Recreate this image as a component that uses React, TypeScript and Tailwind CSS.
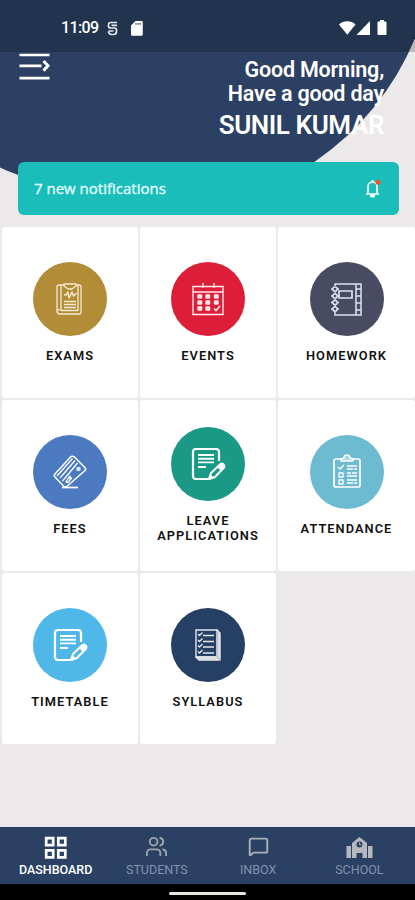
import type { ReactNode } from 'react';
import { MessageSquare, Users } from 'lucide-react';

interface Tile {
  label: string;
  color: string;
  icon: ReactNode;
}

// Shared by "Leave applications" and "Timetable"
function NotePencilIcon() {
  return (
    <svg width="36" height="36" viewBox="0 0 36 36" fill="none" stroke="white" strokeWidth="2.200" strokeLinejoin="round">
      <path d="M29 15V6a3 3 0 0 0-3-3H6a3 3 0 0 0-3 3v24a3 3 0 0 0 3 3h12" />
      <path d="M8 9h16M8 12.700h16M8 16.400h16M8 21h8" strokeWidth="1.900" />
      <path d="M19 33l2-6 9-8.500a1.800 1.800 0 0 1 3.500 3.500L25 31z" strokeWidth="2" />
      <path d="M19 33l1.300-4 2.700 2.700zM27.500 20.500l4 4L34 22l-3-4z" fill="white" strokeWidth="1.400" />
    </svg>
  );
}

function ExamIcon() {
  return (
    <svg width="36" height="36" viewBox="0 0 36 36" fill="none" stroke="#f6ead2" strokeWidth="1.300" strokeLinejoin="round">
      <path d="M12 4H7a2 2 0 0 0-2 2v24a3 3 0 0 0 3 3h19a2 2 0 0 0 2-2V6a2 2 0 0 0-2-2h-3" />
      <path d="M9 4v25.500h17V4M5 30a2 2 0 0 1 3-1" />
      <path d="M12 3h12v2l-4 3h-4l-4-3z" />
      <path d="M12 14h2l2-3 1 6 3-6 1.500 4 3-3" strokeWidth="1.500" />
      <path d="M12 20.500h12M12 23.500h12M12 26.500h12" strokeWidth="1.400" />
    </svg>
  );
}

function EventsIcon() {
  return (
    <svg width="36" height="36" viewBox="0 0 36 36" fill="none" stroke="#ffe9ec" strokeWidth="1.400">
      <path d="M3 5.500h30V33.500H3zM3 11h30M13 2v5M24 2v5" />
      {[14, 20, 26].map((y) =>
        [8, 16, 24.5].map((x) =>
          x === 24.5 && y === 26 ? null : (
            <rect key={`${x}-${y}`} x={x} y={y} width="3.600" height="3" rx="0.600" fill="#ffd9de" />
          )
        )
      )}
      <path d="M24 27.500l2 2 4-4.500" strokeWidth="1.600" />
    </svg>
  );
}

function HomeworkIcon() {
  return (
    <svg width="36" height="36" viewBox="0 0 36 36" fill="none" stroke="#dfe2f3" strokeWidth="1.500">
      <path d="M6 5V3h26v31H6v-4M27 3v31M27 8h5M27 15h5M27 22h5M27 29h5" />
      <path d="M10 10h13v7H10z" strokeWidth="1.700" />
      <path d="M6 11v2M6 18v2M6 24v2" />
      {[8, 15, 21.5, 28].map((y) => (
        <g key={y}>
          <circle cx="6" cy={y} r="2.100" />
          <path d={`M2 ${y}h2M8 ${y}h2`} />
        </g>
      ))}
    </svg>
  );
}

function FeesIcon() {
  return (
    <svg width="36" height="36" viewBox="0 0 36 36" fill="none" stroke="white" strokeWidth="1.500" strokeLinejoin="round">
      <path d="M18.500 3L2.800 20.200a2 2 0 0 0 .2 2.800l9 9.500a2 2 0 0 0 2.800 0L33 16.500a2 2 0 0 0 0-2.800L22.500 3a2.800 2.800 0 0 0-4 0z" />
      <path d="M20.500 4.500L5 22M23 6.500L8 24M25.500 9L10.500 27" strokeWidth="1.300" />
      <circle cx="26.500" cy="15" r="2.300" fill="#dce9fb" stroke="none" />
      <path d="M14 28l3-5 2.500 1-3.500 4.500zM18 21.500v5" strokeWidth="1.300" />
      <path d="M10 33.500h16" strokeWidth="1.700" />
    </svg>
  );
}

function AttendanceIcon() {
  return (
    <svg width="36" height="36" viewBox="0 0 36 36" fill="none" stroke="white" strokeWidth="1.700" strokeLinejoin="round">
      <path d="M12 5H7a2 2 0 0 0-2 2v24a2 2 0 0 0 2 2h22a2 2 0 0 0 2-2V7a2 2 0 0 0-2-2h-5" />
      <path d="M12 7V5l3-1a3 3 0 0 1 6 0l3 1v2z" fill="#a9dbe7" strokeWidth="1.400" />
      <path d="M9 13l2 2 4-4M10 19h4v4h-4zM10 26h4v4h-4z" strokeWidth="1.300" />
      <path d="M18 12h10M18 15h6M25 15h3M18 19h4M23 19h5M18 22h10M18 26h10M18 29h6M25 29h3" strokeWidth="1.400" />
    </svg>
  );
}

function SyllabusIcon() {
  return (
    <svg width="36" height="36" viewBox="0 0 36 36" fill="none" stroke="#e4e7ec" strokeWidth="1.400">
      <path d="M6 3h21v27H6z" />
      <path d="M27 3l3 3v27H9l-3-3h21z" fill="#d5d9df" strokeLinejoin="round" />
      <path d="M27 4v26M27 30l3 3" stroke="#8390a3" strokeWidth="0.700" />
      {[7.5, 13.5, 19, 25].map((y) => (
        <path key={y} d={`M8 ${y - 0.5}l1.500 1.500 3-3M13 ${y + 1}h11`} />
      ))}
    </svg>
  );
}

function SchoolIcon() {
  return (
    <svg width="27" height="22" viewBox="0 0 27 22" fill="#b5b9bd">
      <path fillRule="evenodd" d="M13.500 0L21 6v15h-4.500v-5h-6v5H6V6zM13.500 4.500a3 3 0 1 0 0 6 3 3 0 0 0 0-6z" />
      <path d="M0.500 9H5v12H.500zM22 9h4.500v12H22z" />
      <path d="M13.500 5.500v2.200h2" fill="none" stroke="#b5b9bd" />
    </svg>
  );
}

function DashboardIcon() {
  return (
    <svg width="24" height="24" viewBox="0 0 24 24" fill="none" stroke="white" strokeWidth="2.700">
      <path d="M2.200 2.200h7v7h-7zM14.300 2.200h7v7h-7zM2.200 14.300h7v7h-7zM14.300 14.300h7v7h-7z" />
    </svg>
  );
}

const tiles: Tile[] = [
  { label: 'EXAMS', color: 'bg-[#b28c36]', icon: <ExamIcon /> },
  { label: 'EVENTS', color: 'bg-[#dc1e38]', icon: <EventsIcon /> },
  { label: 'HOMEWORK', color: 'bg-[#484b61]', icon: <HomeworkIcon /> },
  { label: 'FEES', color: 'bg-[#4b7ac0]', icon: <FeesIcon /> },
  { label: 'LEAVE APPLICATIONS', color: 'bg-[#1a9986]', icon: <NotePencilIcon /> },
  { label: 'ATTENDANCE', color: 'bg-[#6dbbd0]', icon: <AttendanceIcon /> },
  { label: 'TIMETABLE', color: 'bg-[#50b8e9]', icon: <NotePencilIcon /> },
  { label: 'SYLLABUS', color: 'bg-[#263f64]', icon: <SyllabusIcon /> },
];

const tabs = [
  { label: 'DASHBOARD', icon: <DashboardIcon />, active: true },
  { label: 'STUDENTS', icon: <Users className="-mt-[3px]" size={23} strokeWidth={2} color="#9da4ae" />, active: false },
  { label: 'INBOX', icon: <MessageSquare className="-mt-[3px]" size={21} strokeWidth={2.2} color="#a9b0b8" />, active: false },
  { label: 'SCHOOL', icon: <SchoolIcon />, active: false },
];

function StatusBar() {
  return (
    <div className="flex h-[52px] items-center justify-between bg-black/20 pt-1 pr-[28px] pl-[61px] text-white">
      <div className="flex items-center">
        <span className="w-[38px] text-[16px] leading-5 font-medium tracking-[-0.6px] whitespace-nowrap">11:09</span>
        <svg className="ml-[8px]" width="11" height="15" viewBox="0 0 11 15" fill="none" stroke="#e4e8ec" strokeWidth="1.700">
          <path d="M10 1.500H3.500a2 2 0 0 0-2 2V5a2 2 0 0 0 2 2h4a2 2 0 0 1 2 2v1.500a3 3 0 0 1-3 3h-2a3 3 0 0 1-3-3M4.500 4.300H10M1.500 10h5" />
        </svg>
        <svg className="ml-[13px]" width="12" height="15" viewBox="0 0 12 15" fill="white">
          <path fillRule="evenodd" d="M4.500 0H10.500a1.300 1.300 0 0 1 1.300 1.300V13.500A1.300 1.300 0 0 1 10.500 14.800H1.300A1.300 1.300 0 0 1 0 13.500V4.500zM4.500 2v1.800h1V2zM6.600 2v1.800h1V2zM8.700 2v1.800h1V2z" />
        </svg>
      </div>
      <svg width="48" height="16" viewBox="0 0 48 16" fill="white">
        <path d="M0 4.500C4.500 .3 12 .3 16.500 4.500L8.300 14.800z" />
        <path d="M31 1v14H17.500z" />
        <path d="M41 0h4v1.500h1.500a1 1 0 0 1 1 1V14a1 1 0 0 1-1 1H39.500a1 1 0 0 1-1-1V2.500a1 1 0 0 1 1-1H41z" />
      </svg>
    </div>
  );
}

export default function App() {
  return (
    <div className="relative flex h-[900px] w-[415px] flex-col overflow-hidden bg-[#ebe9ea] font-['Roboto',sans-serif]">
      {/* Curved header backdrop */}
      <svg className="absolute top-0 left-0" width="415" height="200" viewBox="0 0 415 200" fill="#2b4062">
        <path d="M0 0H415V38.500A283.500 283.500 0 0 1 315 161.500L270 187H60L17 174.500Q8 171.500 0 167.500z" />
      </svg>

      <div className="relative flex h-[162px] flex-col">
        <StatusBar />
        <div className="flex justify-between pr-[31px] pl-[19px]">
          <svg className="mt-px" width="31" height="28" viewBox="0 0 31 28" fill="none" stroke="white" strokeWidth="2.700">
            <path d="M.500 2h30M.500 12.800h22M.500 25.200h30" />
            <path d="M24.500 8l4.500 4.800-4.500 4.800" strokeWidth="3" />
          </svg>
          <div className="pt-[6px] text-right font-semibold whitespace-nowrap text-white">
            <p className="text-[21.5px] leading-6 tracking-[-0.2px]">Good Morning,</p>
            <p className="text-[21.5px] leading-6 tracking-[-0.2px]">Have a good day</p>
            <p className="mt-[4px] text-[26px] leading-[30px] tracking-[-0.4px]">SUNIL KUMAR</p>
          </div>
        </div>
      </div>

      <div className="relative mr-[16px] ml-[18px] flex h-[53px] shrink-0 items-center justify-between rounded-[6px] bg-[#1abdba] pr-[18px] pl-[16px]">
        <span className="font-['Open_Sans',sans-serif] text-[15px] font-medium text-[#e6fffb] [-webkit-text-stroke:0.3px_#e6fffb]">
          7 new notifications
        </span>
        <svg width="16" height="19" viewBox="0 0 16 19" fill="none" stroke="white" strokeWidth="1.700">
          <path d="M1 15h13M3 15V7.500a4.500 4.500 0 0 1 9 0V15M7.500 3V1" />
          <path d="M6 16.500h3v1H6z" fill="white" />
          <circle cx="13" cy="3.300" r="2.500" fill="#f0522d" stroke="none" />
        </svg>
      </div>

      <div className="mt-[12px] grid grid-cols-[136px_136px_137px] gap-x-[2px] gap-y-[2.5px] pl-[2px]">
        {tiles.map((tile) => (
          <div key={tile.label} className="flex h-[170.500px] flex-col items-center justify-center gap-[12px] rounded-[3px] bg-white">
            <div className={`flex size-[74px] items-center justify-center rounded-full ${tile.color}`}>{tile.icon}</div>
            <span className="w-[110px] text-center text-[12.8px] leading-[15px] font-semibold tracking-[1.05px] text-[#111]">
              {tile.label}
            </span>
          </div>
        ))}
      </div>

      <nav className="mt-auto grid h-[57px] shrink-0 grid-cols-4 bg-[#2a4163] px-[5px]">
        {tabs.map((tab) => (
          <div key={tab.label} className="flex flex-col items-center pt-[9px]">
            <div className="flex h-6 items-center">{tab.icon}</div>
            <span className={`mt-[2px] text-[12.5px] leading-4 ${tab.active ? 'font-medium text-white' : 'text-[#8292ad]'}`}>
              {tab.label}
            </span>
          </div>
        ))}
      </nav>
      <div className="flex h-4 shrink-0 items-center justify-center bg-black pt-[2px]">
        <div className="h-[3px] w-[77px] rounded-full bg-[#e8e8e0]" />
      </div>
    </div>
  );
}
